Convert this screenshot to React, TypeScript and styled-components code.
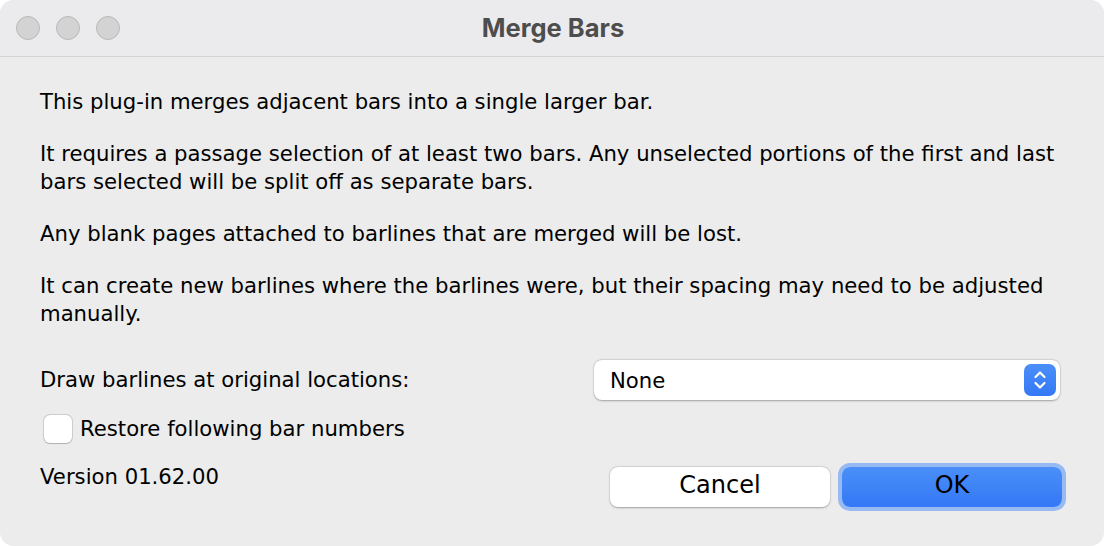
import React from "react";
import styled, { createGlobalStyle } from "styled-components";

const GlobalStyle = createGlobalStyle`
  html, body {
    margin: 0;
    padding: 0;
    background: #ffffff;
  }
  * {
    box-sizing: border-box;
  }
`;

const paragraphs = [
  "This plug-in merges adjacent bars into a single larger bar.",
  "It requires a passage selection of at least two bars. Any unselected portions of the first and last bars selected will be split off as separate bars.",
  "Any blank pages attached to barlines that are merged will be lost.",
  "It can create new barlines where the barlines were, but their spacing may need to be adjusted manually.",
];

function App() {
  return (
    <>
      <GlobalStyle />
      <Window>
        <TitleBar>
          <Lights>
            <Light />
            <Light />
            <Light />
          </Lights>
          <Title>Merge Bars</Title>
        </TitleBar>
        <Body>
          <Description>
            {paragraphs.map((p) => (
              <Paragraph key={p}>{p}</Paragraph>
            ))}
          </Description>
          <OptionRow>
            <Label>Draw barlines at original locations:</Label>
            <Select>
              <SelectValue>None</SelectValue>
              <Stepper>
                <svg width="14" height="22" viewBox="0 0 14 22">
                  <path
                    d="M2.5 8 L7 3.5 L11.5 8 M2.5 14 L7 18.5 L11.5 14"
                    fill="none"
                    stroke="#ffffff"
                    strokeWidth="2.2"
                    strokeLinecap="round"
                    strokeLinejoin="round"
                  />
                </svg>
              </Stepper>
            </Select>
          </OptionRow>
          <CheckRow>
            <Checkbox />
            <Label>Restore following bar numbers</Label>
          </CheckRow>
          <Footer>
            <Label>Version 01.62.00</Label>
            <Buttons>
              <Button>Cancel</Button>
              <Button primary>OK</Button>
            </Buttons>
          </Footer>
        </Body>
      </Window>
    </>
  );
}

export default App;

const Window = styled.div`
  width: 1104px;
  height: 546px;
  background: #ececec;
  border-radius: 14px;
  overflow: hidden;
  display: flex;
  flex-direction: column;
  font-family: "DejaVu Sans", "Noto Sans", sans-serif;
  color: #000000;
`;

const TitleBar = styled.div`
  height: 57px;
  flex-shrink: 0;
  position: relative;
  display: flex;
  align-items: center;
  justify-content: center;
  background: #ebebed;
  border-bottom: 1px solid #d4d4d4;
`;

const Lights = styled.div`
  position: absolute;
  left: 16px;
  top: 16px;
  display: flex;
  gap: 16px;
`;

const Light = styled.div`
  width: 24px;
  height: 24px;
  border-radius: 50%;
  background: #d3d3d3;
  border: 1px solid #b9b9b9;
`;

const Title = styled.div`
  font-family: "Inter", "Liberation Sans", sans-serif;
  font-size: 25.5px;
  font-weight: 700;
  color: #4d4d4d;
  margin-top: -2px;
  margin-left: 2px;
`;

const Body = styled.div`
  flex: 1;
  padding: 31px 40px 0 40px;
  display: flex;
  flex-direction: column;
`;

const Description = styled.div`
  display: flex;
  flex-direction: column;
  gap: 24px;
`;

const Paragraph = styled.p`
  margin: 0;
  font-size: 21.2px;
  line-height: 28px;
`;

const Label = styled.span`
  font-size: 21.2px;
  line-height: 28px;
  white-space: nowrap;
`;

const OptionRow = styled.div`
  margin-top: 32px;
  display: flex;
  align-items: center;
  justify-content: space-between;
  margin-right: 4px;
`;

const Select = styled.div`
  width: 466px;
  height: 40px;
  background: #ffffff;
  border-radius: 8px;
  box-shadow: 0 0.5px 2px rgba(0, 0, 0, 0.3), 0 0 0 0.5px rgba(0, 0, 0, 0.06);
  display: flex;
  align-items: center;
  justify-content: space-between;
  padding: 0 4px 0 16px;
`;

const SelectValue = styled.span`
  font-size: 21.2px;
`;

const Stepper = styled.div`
  width: 32px;
  height: 32px;
  border-radius: 7px;
  background: linear-gradient(#4a8ff8, #3478f6);
  display: flex;
  align-items: center;
  justify-content: center;
`;

const CheckRow = styled.div`
  margin-top: 15px;
  margin-left: 4px;
  display: flex;
  align-items: center;
  gap: 8px;
`;

const Checkbox = styled.div`
  width: 28px;
  height: 28px;
  border-radius: 6px;
  background: #ffffff;
  box-shadow: 0 0 0 1px rgba(0, 0, 0, 0.12), 0 0.5px 1px rgba(0, 0, 0, 0.15);
`;

const Footer = styled.div`
  margin-top: 20px;
  display: flex;
  justify-content: space-between;
  align-items: flex-start;
`;

const Buttons = styled.div`
  display: flex;
  gap: 12px;
  margin-top: 4px;
  margin-right: 2px;
`;

const Button = styled.button<{ primary?: boolean }>`
  width: 220px;
  height: 40px;
  border: none;
  border-radius: 8px;
  font-family: "DejaVu Sans", "Noto Sans", sans-serif;
  font-size: 24px;
  line-height: 28px;
  color: #000000;
  padding: 0 0 4px 0;
  background: ${(p) =>
    p.primary ? "linear-gradient(#4a8ff8, #3478f6)" : "#ffffff"};
  box-shadow: ${(p) =>
    p.primary
      ? "0 0 0 4px rgba(80, 145, 245, 0.55)"
      : "0 0.5px 2px rgba(0, 0, 0, 0.3), 0 0 0 0.5px rgba(0, 0, 0, 0.06)"};
`;
